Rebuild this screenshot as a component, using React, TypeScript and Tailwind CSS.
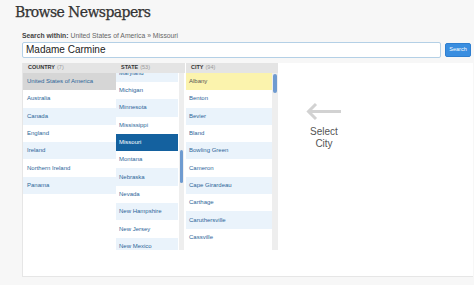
import React from "react";

const countries = [
  "United States of America",
  "Australia",
  "Canada",
  "England",
  "Ireland",
  "Northern Ireland",
  "Panama",
];
const states = [
  "Maryland",
  "Michigan",
  "Minnesota",
  "Mississippi",
  "Missouri",
  "Montana",
  "Nebraska",
  "Nevada",
  "New Hampshire",
  "New Jersey",
  "New Mexico",
];
const cities = [
  "Albany",
  "Benton",
  "Bevier",
  "Bland",
  "Bowling Green",
  "Cameron",
  "Cape Girardeau",
  "Carthage",
  "Caruthersville",
  "Cassville",
];

function Header({ label, count }: { label: string; count: string }) {
  return (
    <div className="h-[10px] bg-[#e4e4e4] flex items-center pl-[5px] text-[5.5px] leading-none">
      <span className="font-bold text-[#333]">{label}</span>
      <span className="ml-[2px] text-[#9a9a9a]">{count}</span>
    </div>
  );
}

export default function App() {
  return (
    <div className="w-[474px] h-[285px] overflow-hidden bg-[#f7f7f7] font-['Liberation_Sans',Arial,sans-serif]">
      <h1 className="pl-[15px] pt-[5px] h-[30px] text-[14px] leading-[14px] tracking-[-0.6px] text-[#333] font-['DejaVu_Serif',serif] [-webkit-text-stroke:0.25px_#333]">
        Browse Newspapers
      </h1>
      <div className="pl-[22px] h-[10px] mt-[1px] flex items-center text-[6.8px] leading-none text-[#555]">
        <span className="font-bold text-[#444]">Search within:</span>
        <span className="ml-[2px] text-[#666]">United States of America » Missouri</span>
      </div>
      <div className="flex items-center pl-[22px] h-[17px]">
        <div className="w-[419px] h-[16px] bg-white border border-[#b4d0e6] rounded-[2px] flex items-center pl-[3px] text-[10px] text-[#222]">
          Madame Carmine
        </div>
        <div className="ml-[4px] w-[26px] h-[14px] rounded-[2px] bg-[#3a8ee0] border border-[#2f7fd0] flex items-center justify-center text-white text-[5.5px]">
          Search
        </div>
      </div>
      <div className="ml-[22px] mt-[5px] w-[451px] h-[214px] bg-white border-l border-b border-[#e6e6e6] flex">
        {/* Country */}
        <div className="w-[93px] flex flex-col">
          <Header label="COUNTRY" count="(7)" />
          <div className="flex flex-col">
            {countries.map((c, i) => (
              <div
                key={c}
                className={
                  "h-[17.3px] flex items-center pl-[4px] text-[6px] text-[#2d6699] " +
                  (i === 0 ? "bg-[#d6d6d6]" : i % 2 === 0 ? "bg-[#eaf3fb]" : "bg-white")
                }
              >
                {c}
              </div>
            ))}
          </div>
        </div>
        {/* State */}
        <div className="w-[69px] flex flex-col">
          <Header label="STATE" count="(53)" />
          <div className="h-[177px] flex">
            <div className="w-[62px] overflow-hidden flex flex-col">
              {states.map((s, i) => (
                <div
                  key={s}
                  className={
                    "shrink-0 h-[17.3px] flex items-center pl-[3px] text-[6px] " +
                    (i === 0 ? "-mt-[8.3px] " : "") +
                    (s === "Missouri"
                      ? "bg-[#14619f] text-white"
                      : i % 2 === 0
                      ? "bg-[#eaf3fb] text-[#2d6699]"
                      : "bg-white text-[#2d6699]")
                  }
                >
                  {s}
                </div>
              ))}
            </div>
            <div className="ml-[1px] w-[5px] bg-[#eeeeee] relative">
              <div className="absolute left-[1px] top-[77px] w-[3px] h-[33px] rounded-full bg-[#6f9bd0]" />
            </div>
          </div>
        </div>
        {/* City */}
        <div className="ml-[1px] w-[92px] flex flex-col">
          <Header label="CITY" count="(94)" />
          <div className="h-[177px] flex">
            <div className="w-[86px] overflow-hidden flex flex-col">
              {cities.map((c, i) => (
                <div
                  key={c}
                  className={
                    "shrink-0 h-[17.3px] flex items-center pl-[3px] text-[6px] " +
                    (i === 0
                      ? "bg-[#fbf3ad] text-[#555]"
                      : i % 2 === 0
                      ? "bg-[#eaf3fb] text-[#2d6699]"
                      : "bg-white text-[#2d6699]")
                  }
                >
                  {c}
                </div>
              ))}
            </div>
            <div className="w-[6px] bg-[#eeeeee] relative">
              <div className="absolute left-[1px] top-[1px] w-[4px] h-[19px] rounded-full bg-[#6f9bd0]" />
            </div>
          </div>
        </div>
        {/* Hint */}
        <div className="ml-[22px] w-[48px] pt-[39px] flex flex-col items-center">
          <svg width="36" height="19" viewBox="0 0 36 19" fill="none">
            <path d="M2 9.5 H35" stroke="#d2d2d2" strokeWidth="3" />
            <path d="M10 2 L2.5 9.5 L10 17" stroke="#d2d2d2" strokeWidth="3" strokeLinejoin="miter" />
          </svg>
          <div className="mt-[5px] text-[10px] leading-[11.5px] text-[#555] text-center">
            Select
            <br />
            City
          </div>
        </div>
      </div>
    </div>
  );
}
